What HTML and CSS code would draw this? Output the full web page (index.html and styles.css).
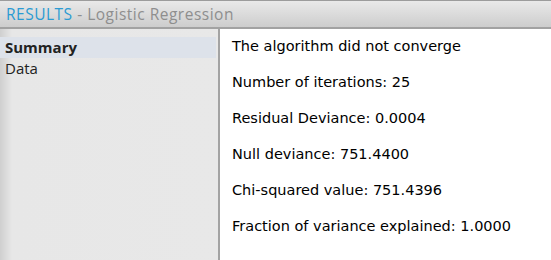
FILE: index.html
```html
<!DOCTYPE html>
<html lang="en">
<head>
    <meta charset="UTF-8">
    <title>Results</title>
    <link rel="stylesheet" href="styles.css">
</head>
<body>

    <div class="header">
        <span class="title">RESULTS</span> <span class="subtitle">- Logistic Regression</span>
    </div>

    <div class="main">
        <div class="sidebar">
            <div class="item active">Summary</div>
            <div class="item">Data</div>
        </div>

        <div class="content">
            <p>The algorithm did not converge</p>
            <p>Number of iterations: 25</p>
            <p>Residual Deviance: 0.0004</p>
            <p>Null deviance: 751.4400</p>
            <p>Chi-squared value: 751.4396</p>
            <p>Fraction of variance explained: 1.0000</p>
        </div>
    </div>

</body>
</html>
```

FILE: styles.css
```css
body {
    margin: 0;
    font-family: "Open Sans", Arial, sans-serif;
    background: #fff;
    height: 260px;
    display: flex;
    flex-direction: column;
}
.header {
    height: 26px;
    border-top: 1px solid #9c9c9c;
    border-bottom: 2px solid #a2a2a2;
    background: linear-gradient(#e9e9e9, #cdcdcd);
    padding-left: 6px;
    font-size: 15.5px;
    line-height: 26px;
    letter-spacing: 0.5px;
    white-space: nowrap;
}
.title {
    color: #2b9bd3;
}
.subtitle {
    color: #8e8e8e;
}
.main {
    flex: 1;
    display: flex;
}
.sidebar {
    width: 218px;
    padding-top: 8px;
    background: linear-gradient(to right, #cfcfcf, #e7e7e7 12px, #e8e8e8);
}
.item {
    height: 21px;
    line-height: 21px;
    padding-left: 5px;
    font-size: 15px;
    color: #222;
}
.item.active {
    font-weight: bold;
    background: #dde2ea;
    margin-right: 2px;
}
.content {
    flex: 1;
    border-left: 2px solid #a3a3a3;
    padding: 7px 12px;
    font-family: "DejaVu Sans", Verdana, sans-serif;
    font-size: 14.5px;
    color: #000;
}
.content p {
    margin: 0 0 16px;
    line-height: 20px;
}
```
